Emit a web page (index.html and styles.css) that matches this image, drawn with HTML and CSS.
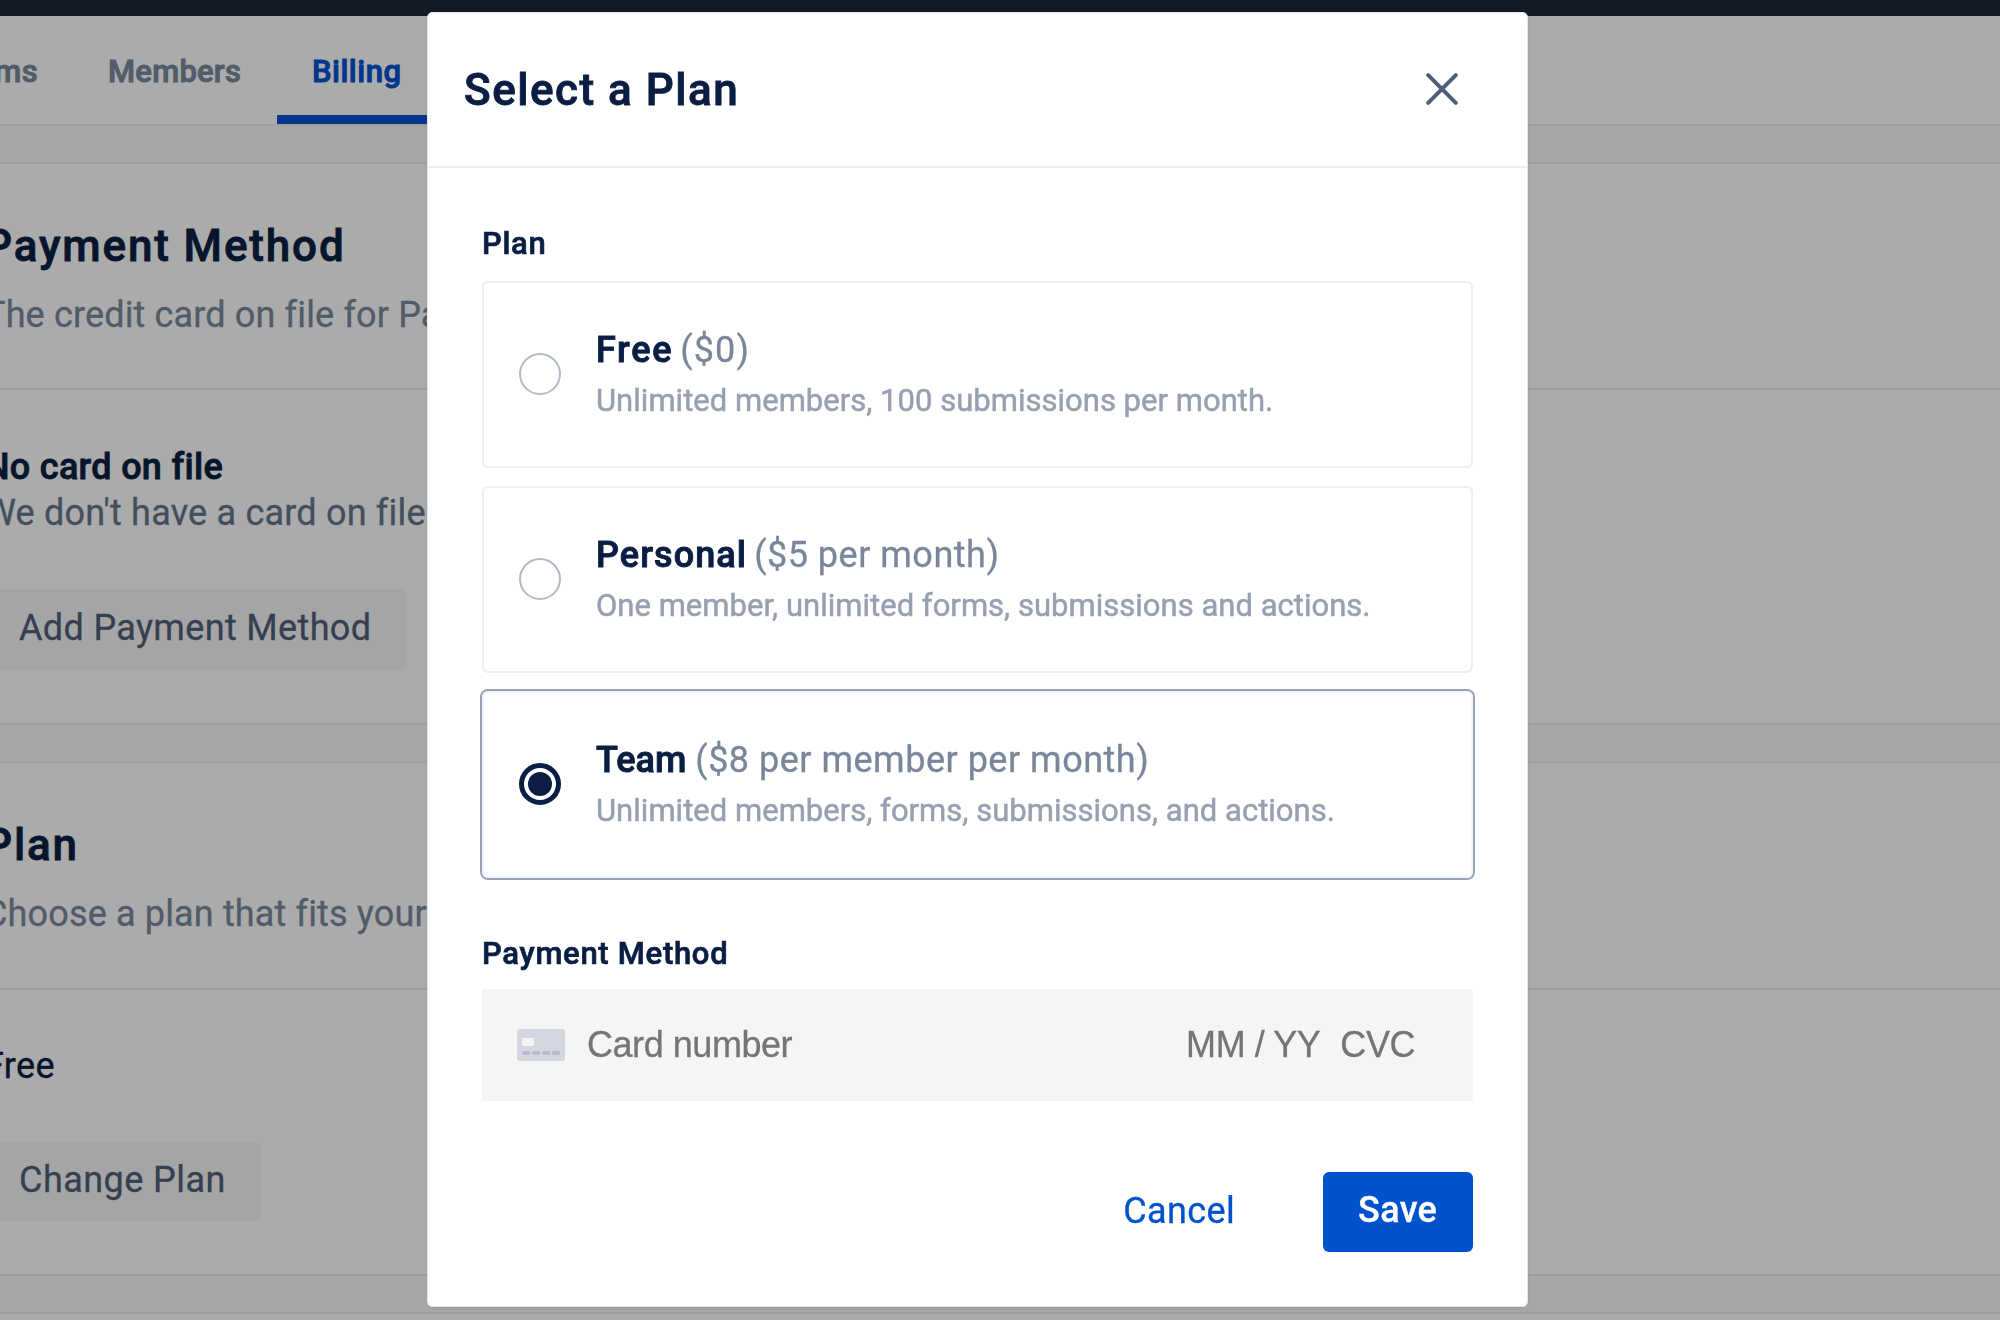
FILE: index.html
```
<!DOCTYPE html>
<html lang="en">
<head>
<meta charset="utf-8">
<title>Billing</title>
<link rel="stylesheet" href="styles.css">
</head>
<body>
<div class="page">
  <header class="topbar"></header>
  <nav class="tabs">
    <a class="tab tab-forms">Forms</a>
    <a class="tab tab-members">Members</a>
    <a class="tab tab-billing active">Billing</a>
  </nav>

  <main class="sections">
    <section class="section">
      <div class="section-head">
        <h2>Payment Method</h2>
        <p>The credit card on file for Paperform.</p>
      </div>
      <div class="section-body body-payment">
        <p class="line strong">No card on file</p>
        <p class="line muted">We don't have a card on file.</p>
        <button class="btn btn-add">Add Payment Method</button>
      </div>
    </section>

    <section class="section">
      <div class="section-head section-head-plan">
        <h2>Plan</h2>
        <p>Choose a plan that fits your needs.</p>
      </div>
      <div class="section-body">
        <p class="line">Free</p>
        <button class="btn btn-change">Change Plan</button>
      </div>
    </section>

    <section class="section"></section>
  </main>
</div>

<div class="overlay">
  <div class="modal" role="dialog">
    <div class="modal-head">
      <h1>Select a Plan</h1>
      <svg class="close" viewBox="0 0 32 32"><path d="M2.2 2.2 29.8 29.8M29.8 2.2 2.2 29.8"/></svg>
    </div>
    <div class="modal-body">
      <div class="label">Plan</div>
      <div class="plans">
        <div class="plan">
          <span class="radio"></span>
          <div class="plan-text">
            <div class="plan-name"><b class="name-free">Free</b><span class="price-free">($0)</span></div>
            <div class="plan-desc">Unlimited members, 100 submissions per month.</div>
          </div>
        </div>
        <div class="plan">
          <span class="radio"></span>
          <div class="plan-text">
            <div class="plan-name"><b>Personal</b><span>($5 per month)</span></div>
            <div class="plan-desc">One member, unlimited forms, submissions and actions.</div>
          </div>
        </div>
        <div class="plan selected">
          <span class="radio"></span>
          <div class="plan-text">
            <div class="plan-name"><b class="name-team">Team</b><span>($8 per member per month)</span></div>
            <div class="plan-desc">Unlimited members, forms, submissions, and actions.</div>
          </div>
        </div>
      </div>

      <div class="label label-payment">Payment Method</div>
      <div class="card-field">
        <svg class="card-icon" viewBox="0 0 48 32">
          <rect width="48" height="32" rx="3" fill="#d4d7df"/>
          <rect x="5" y="9" width="12" height="8" rx="1" fill="#f5f5f5"/>
          <g fill="#b6bacb">
            <rect x="5" y="22" width="8.4" height="4" rx="2"/>
            <rect x="15" y="22" width="8.4" height="4" rx="2"/>
            <rect x="25" y="22" width="8.4" height="4" rx="2"/>
            <rect x="35" y="22" width="8.4" height="4" rx="2"/>
          </g>
        </svg>
        <span class="card-number">Card number</span>
        <span class="card-expiry">MM / YY</span>
        <span class="card-cvc">CVC</span>
      </div>

      <div class="actions">
        <a class="cancel">Cancel</a>
        <button class="btn save">Save</button>
      </div>
    </div>
  </div>
</div>
</body>
</html>
```
FILE: styles.css
```
* { box-sizing: border-box; }
html, body { margin: 0; height: 100%; overflow: hidden; }
body {
  font: 400 36px/46px Roboto, "Liberation Sans", sans-serif;
  letter-spacing: 0.35px;
  color: #091e42;
  background: #fafafa;
  -webkit-text-stroke: 0.3px;
}
h1, h2, p { margin: 0; font-weight: 400; white-space: nowrap; }

.page { height: 1320px; overflow: hidden; }
.topbar { height: 16px; background: #1d2738; }

.tabs {
  display: flex;
  height: 110px;
  background: #fff;
  border-bottom: 2px solid #ededf2;
}
.tab {
  flex: none;
  display: flex;
  align-items: center;
  height: 108px;
  padding: 4px 35px 0;
  font-size: 31px;
  font-weight: 500;
  color: #7a899c;
  -webkit-text-stroke: 0.9px;
}
.tab-forms { width: 150px; margin-left: -77px; justify-content: flex-end; }
.tab-members { width: 204px; letter-spacing: 0.22px; }
.tab-billing { width: 160px; letter-spacing: 0.5px; }
.tab.active { color: #0052d2; box-shadow: inset 0 -9px #0052d2; }

.sections {
  display: flex;
  flex-direction: column;
  gap: 36px;
  padding-top: 36px;
}
.section { border: solid #ededf2; border-width: 2px 0; background: #fff; min-height: 60px; }
.section-head {
  height: 226px;
  padding-top: 60px;
  margin-left: -16px;
  border-bottom: 2px solid #ededf2;
}
.section-head-plan { height: 227px; }
.section-head h2 {
  font-size: 44px;
  line-height: 44px;
  font-weight: 500;
  letter-spacing: 1.85px;
  -webkit-text-stroke: 0.8px;
}
.section-head p {
  margin-top: 25px;
  line-height: 44px;
  letter-spacing: 0.15px;
  color: #7a899c;
}
.section-body { padding: 53px 0; margin-left: -16px; }
.body-payment { padding-top: 54px; }
.line.strong { font-weight: 500; letter-spacing: 0.3px; -webkit-text-stroke: 0.8px; }
.line.muted { color: #66778c; letter-spacing: 0.2px; }

.btn {
  display: block;
  height: 80px;
  padding: 0 36px 4px;
  border: 0;
  border-radius: 6px;
  background: #f6f6f6;
  color: #505f79;
  font: inherit;
  letter-spacing: inherit;
  text-align: left;
  white-space: nowrap;
}
.section-body .btn { margin-top: 53px; }
.section-body .btn-add { width: 423px; height: 81px; padding-left: 35px; }
.section-body .btn-change { width: 277px; height: 79px; padding-left: 35px; letter-spacing: 0.45px; }

.overlay {
  position: fixed;
  inset: 0;
  display: flex;
  align-items: flex-start;
  padding: 12px 0 0 427px;
  background: rgba(0, 0, 0, 0.33);
}
.modal {
  width: 1101px;
  height: 1295px;
  border-radius: 6px;
  background: #fff;
  box-shadow: inset 0 0 0 1px #e3e4ec, 0 2px 4px rgba(0, 0, 0, 0.08);
}
.modal-head {
  display: flex;
  align-items: center;
  justify-content: space-between;
  height: 156px;
  margin: 0 1px;
  padding: 0 69px 0 36px;
  border-bottom: 2px solid #ebedf1;
}
.modal-head h1 {
  padding-top: 2px;
  font-size: 44px;
  font-weight: 500;
  letter-spacing: 1.5px;
  -webkit-text-stroke: 0.9px;
}
.close {
  width: 32px;
  height: 32px;
  fill: none;
  stroke: #505f79;
  stroke-width: 4;
  stroke-linecap: round;
}
.modal-body { padding: 58px 55px 0; }
.label {
  font-size: 31px;
  line-height: 36px;
  font-weight: 500;
  letter-spacing: 0.7px;
  -webkit-text-stroke: 0.7px;
}
.plans { display: flex; flex-direction: column; gap: 18px; margin-top: 19px; }
.plan {
  display: flex;
  align-items: center;
  gap: 35px;
  height: 187px;
  padding-left: 35px;
  border: 2px solid #eeeef3;
  border-radius: 6px;
}
.plan.selected { border-color: #f3f4f7; box-shadow: 0 0 0 2px #98a2b5; }
.radio {
  display: flex;
  width: 42px;
  height: 42px;
  margin-bottom: 2px;
  border: 2px solid #b3bac5;
  border-radius: 50%;
}
.selected .radio {
  align-items: center;
  justify-content: center;
  border: 5px solid #091e42;
}
.selected .radio::after {
  content: "";
  width: 24px;
  height: 24px;
  border-radius: 50%;
  background: #091e42;
}
.plan-name { display: flex; gap: 7px; line-height: 44px; }
.plan-name b { font-weight: 500; letter-spacing: 1.1px; -webkit-text-stroke: 0.9px; }
.plan-name .name-free { letter-spacing: 1.7px; }
.plan-name .name-team { letter-spacing: 0; margin-right: 2px; }
.plan-name span { color: #7a869a; letter-spacing: 0.5px; }
.plan-name .price-free { letter-spacing: 1.2px; }
.plan-desc {
  margin-top: 9px;
  font-size: 31px;
  line-height: 40px;
  letter-spacing: 0.02px;
  color: #97a0b0;
  -webkit-text-stroke: 0.5px;
}

.label-payment { margin-top: 58px; }
.card-field {
  display: flex;
  align-items: center;
  height: 112px;
  margin-top: 17px;
  padding: 0 58px 0 35px;
  background: #f5f5f5;
  color: #757575;
  font-family: "Liberation Sans", Arial, sans-serif;
  letter-spacing: -0.45px;
}
.card-icon { width: 48px; height: 32px; margin-right: 22px; }
.card-expiry { margin-left: auto; margin-right: 20px; }

.actions {
  display: flex;
  justify-content: flex-end;
  gap: 88px;
  margin-top: 71px;
}
.cancel { padding-top: 16px; color: #0052cc; }
.save { width: 150px; padding-left: 35px; color: #fff; background: #0052cc; font-weight: 500; }
```
